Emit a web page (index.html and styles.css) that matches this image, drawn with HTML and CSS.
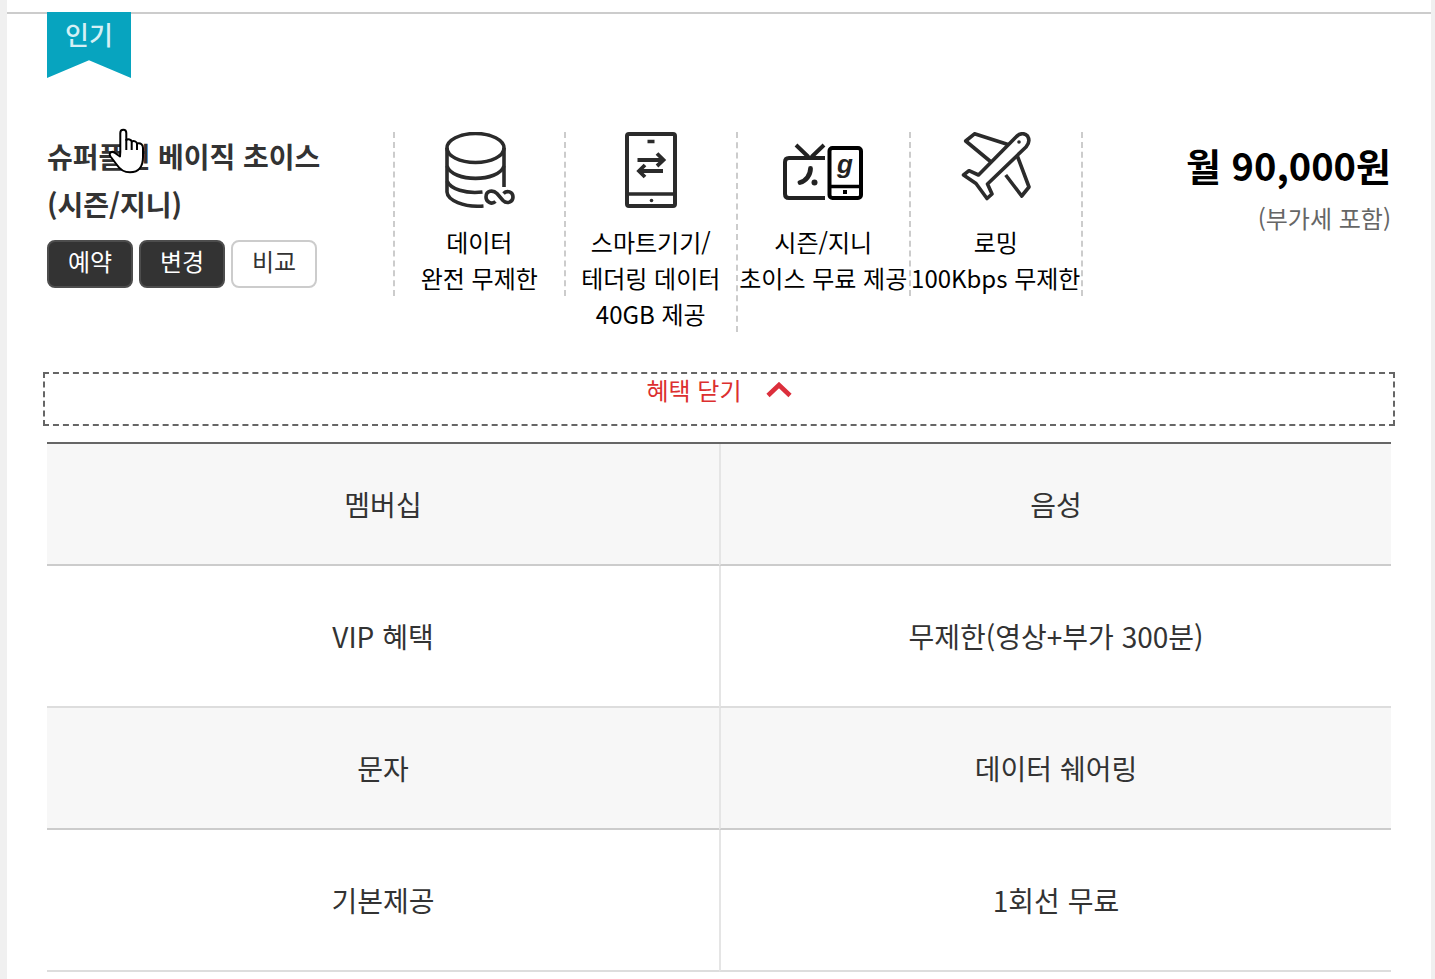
FILE: index.html
```html
<!DOCTYPE html>
<html lang="ko">
<head>
    <meta charset="UTF-8">
    <meta name="viewport" content="width=device-width, initial-scale=1">
    <title>슈퍼플랜 베이직 초이스</title>
    <link rel="stylesheet" href="styles.css">
</head>
<body>

    <main class="page">
        <section class="plan">
            <div class="ribbon">인기</div>

            <div class="plan-info">
                <div class="plan-name">
                    <h2>슈퍼플랜 베이직 초이스<br>(시즌/지니)</h2>
                    <div class="plan-buttons">
                        <button type="button" class="btn btn-dark">예약</button>
                        <button type="button" class="btn btn-dark">변경</button>
                        <button type="button" class="btn">비교</button>
                    </div>
                    <svg class="pointer" viewBox="0 0 38 46" aria-hidden="true">
                        <path d="M12.3 24V5C12.3 .6 18.3 .6 18.3 5V12C20 10.5 23.3 11.5 23.7 13.5C26 12.5 28.6 13.5 29 15.5C33 14.5 35 17 35 20V29C35 38 31 44.3 22 44.3C15 44.3 11.5 41 9 37L2.5 28.5C0 25 4 22.5 7 25L12 28.5Z" fill="#fff" stroke="#000" stroke-width="2" stroke-linejoin="round"/>
                        <path d="M18.3 11V22M23.7 13.5V22M29 15.5V22" fill="none" stroke="#000" stroke-width="2"/>
                    </svg>
                </div>

                <ul class="benefits">
                    <li>
                        <svg class="icon" viewBox="0 0 80 76" aria-hidden="true">
                            <g fill="none" stroke="#2b2b2b" stroke-width="3.6">
                                <ellipse cx="36.5" cy="16" rx="28.5" ry="14.5"/>
                                <path d="M8 16V60C8.5 68 24 75.5 44.5 74"/>
                                <path d="M65 16V55"/>
                                <path d="M8 34C13.5 50.5 59.5 50.5 65 34"/>
                                <path d="M8 49C11.5 57 26.5 62 43.5 60"/>
                                <path d="M56.5 69.5C52.5 73 47 70 47 65C47 58.5 54 57.5 58 61.5L64 68.5C68 72.5 74 70 74 65C74 59.5 68 58 64.5 61.5"/>
                            </g>
                        </svg>
                        <p>데이터<br>완전 무제한</p>
                    </li>
                    <li>
                        <svg class="icon" viewBox="0 0 80 76" aria-hidden="true">
                            <g fill="none" stroke="#2b2b2b">
                                <rect x="16" y="2" width="48" height="72" rx="2" stroke-width="4"/>
                                <path d="M16 62H64M36.5 9.5H43.5" stroke-width="3.4"/>
                                <path d="M26.5 28H52M46 21.5L52.5 28L46 34M52 39H28M34 33L28 39L34 45" stroke-width="3.8"/>
                            </g>
                            <circle cx="40.5" cy="68.5" r="1.8" fill="#2b2b2b"/>
                        </svg>
                        <p>스마트기기/<br>테더링 데이터<br>40GB 제공</p>
                    </li>
                    <li>
                        <svg class="icon" viewBox="0 0 80 76" aria-hidden="true">
                            <g fill="none" stroke="#222">
                                <path d="M42 26H6Q2 26 2 30V62Q2 66 6 66H42" stroke-width="4"/>
                                <path d="M13 13L25.5 25M41 13L28.5 25" stroke-width="4"/>
                                <path d="M27.5 36.5C27.5 43 23 49 17 50.5" stroke-width="4.8" stroke-linecap="round"/>
                            </g>
                            <circle cx="31.5" cy="50.5" r="3" fill="#222"/>
                            <rect x="46.5" y="16" width="31.5" height="50" rx="3" fill="none" stroke="#000" stroke-width="4"/>
                            <path d="M46 54.5H78" stroke="#000" stroke-width="3.5"/>
                            <rect x="60" y="58" width="4" height="4" fill="#000"/>
                            <text class="icon-letter" x="62" y="41" text-anchor="middle">g</text>
                        </svg>
                        <p>시즌/지니<br>초이스 무료 제공</p>
                    </li>
                    <li>
                        <svg class="icon" viewBox="0 0 80 76" aria-hidden="true">
                            <g fill="none" stroke="#2b2b2b" stroke-width="3.6" stroke-linejoin="round">
                                <path d="M22.5 43L60 5C64 .5 69 1 71.5 4C74 8 73 11.5 70 15L31.5 52L36 62L31 66.5L20 51.5L7.5 43L13 38.7Z"/>
                                <path d="M52 12.5L18.5 1.8L9.7 9L34.5 29.5"/>
                                <path d="M61.5 24.5L73 55L65.7 64L49.7 43"/>
                            </g>
                            <circle cx="63" cy="10" r="1.8" fill="#2b2b2b"/>
                        </svg>
                        <p>로밍<br>100Kbps 무제한</p>
                    </li>
                </ul>

                <div class="price">
                    <strong>월 90,000원</strong>
                    <span>(부가세 포함)</span>
                </div>
            </div>

            <button type="button" class="toggle" aria-expanded="true" aria-controls="benefit-table">
                혜택 닫기
                <svg class="chevron" viewBox="0 0 26 16" aria-hidden="true">
                    <path d="M2 13.5L13 3L24 13.5" fill="none" stroke="#dc2f3c" stroke-width="4.6"/>
                </svg>
            </button>

            <table class="benefit-table" id="benefit-table">
                <tr>
                    <th>멤버십</th>
                    <th>음성</th>
                </tr>
                <tr>
                    <td>VIP 혜택</td>
                    <td>무제한(영상+부가 300분)</td>
                </tr>
                <tr>
                    <th>문자</th>
                    <th>데이터 쉐어링</th>
                </tr>
                <tr>
                    <td>기본제공</td>
                    <td>1회선 무료</td>
                </tr>
            </table>
        </section>
    </main>

</body>
</html>
```
FILE: styles.css
```css
* {
    box-sizing: border-box;
}
body {
    margin: 0;
    background-color: #f0f0f0;
    font-family: "Noto Sans CJK KR", sans-serif;
    font-size: 24px;
    line-height: 36px;
    color: #333;
}
h2, p, ul {
    margin: 0;
    padding: 0;
}
button {
    font-family: inherit;
    font-size: inherit;
    line-height: inherit;
    cursor: pointer;
}
.page {
    min-height: 100vh;
    margin: 0 4px 0 7px;
    padding-top: 12px;
    background-color: #fff;
}
.plan {
    border-top: 2px solid #ccc;
    padding: 0 40px;
}
.ribbon {
    width: 84px;
    height: 66px;
    margin-top: -2px;
    padding-top: 4px;
    background-color: #07a4bf;
    clip-path: polygon(0 0, 100% 0, 100% 100%, 50% 73%, 0 100%);
    color: #d5f0f5;
    font-size: 26px;
    font-weight: 500;
    text-align: center;
}
.plan-info {
    display: grid;
    grid-template-columns: 346fr 690fr 308fr;
    margin-top: 54px;
}
.plan-name {
    position: relative;
}
.plan-name h2 {
    font-size: 28px;
    font-weight: 700;
    line-height: 48px;
    white-space: nowrap;
}
.plan-buttons {
    display: flex;
    gap: 6px;
    margin-top: 12px;
}
.btn {
    width: 86px;
    height: 48px;
    padding: 0 0 6px;
    border: 2px solid #ccc;
    border-radius: 8px;
    background-color: #fff;
    color: #333;
}
.btn-dark {
    border-color: #4d4d4d;
    background-color: #333;
    color: #fff;
}
/* hand cursor over the plan name */
.pointer {
    position: absolute;
    top: -4px;
    left: 61px;
    width: 38px;
    height: 46px;
}
.benefits {
    display: grid;
    grid-template-columns: repeat(4, 1fr);
    align-items: start;
    list-style: none;
}
.benefits li {
    border-right: 2px dashed #ccc;
    color: #000;
    text-align: center;
    white-space: nowrap;
}
.benefits li:first-child {
    border-left: 2px dashed #ccc;
}
.icon {
    display: block;
    width: 80px;
    height: 76px;
    margin: 0 auto 16px;
}
.icon-letter {
    font: italic bold 26px "Liberation Sans", sans-serif;
    fill: #222;
}
.price {
    display: flex;
    flex-direction: column;
    padding-top: 6px;
    text-align: right;
}
.price strong {
    color: #000;
    font-size: 38px;
    line-height: 54px;
}
.price span {
    margin-top: 8px;
    color: #666;
}
.toggle {
    display: flex;
    justify-content: center;
    gap: 24px;
    width: calc(100% + 8px);
    height: 54px;
    margin: 40px -4px 16px;
    padding: 0;
    border: 2px dashed #666;
    background: none;
    color: #dc2f2f;
    line-height: 32px;
}
.chevron {
    width: 26px;
    height: 16px;
    margin-top: 8px;
}
.benefit-table {
    width: 100%;
    table-layout: fixed;
    border-spacing: 0;
    border-top: 2px solid #666;
    font-size: 28px;
}
.benefit-table th {
    height: 122px;
    padding: 0;
    border-bottom: 2px solid #ccc;
    background-color: #f7f7f7;
    font-weight: 400;
}
.benefit-table td {
    height: 142px;
    padding: 0;
    border-bottom: 2px solid #ddd;
    text-align: center;
}
.benefit-table th:last-child,
.benefit-table td:last-child {
    border-left: 2px solid #e5e5e5;
}
```
